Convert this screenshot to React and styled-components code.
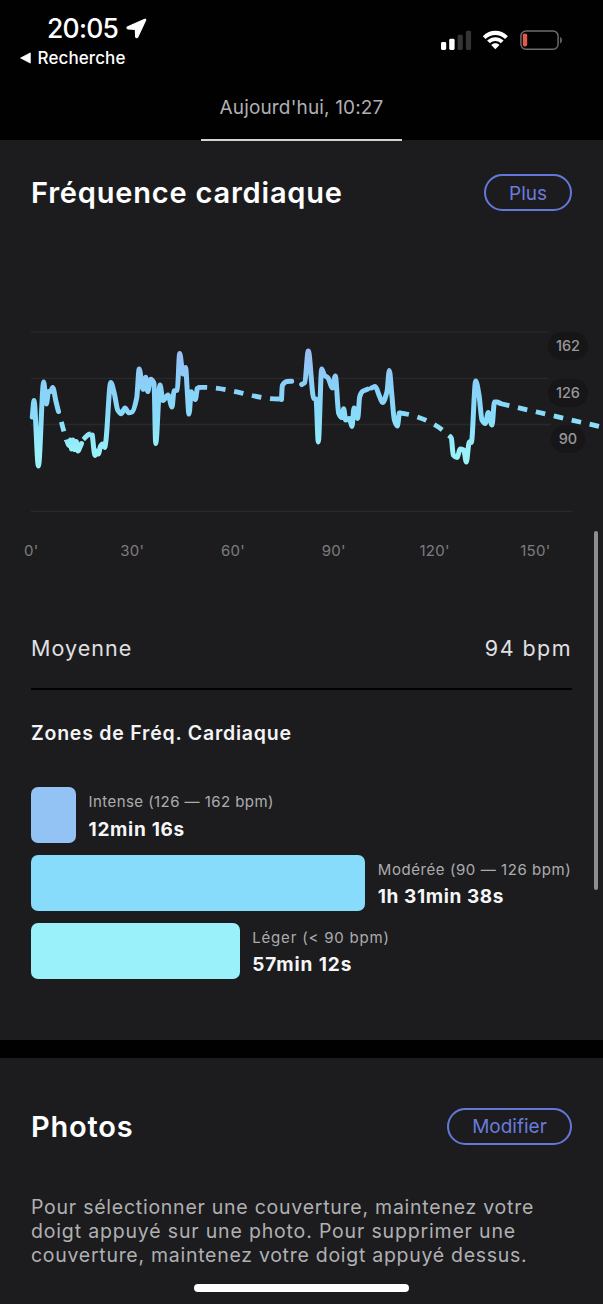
import React from "react";
import styled, { createGlobalStyle } from "styled-components";

const GlobalStyle = createGlobalStyle`
  * { box-sizing: border-box; }
  body {
    margin: 0;
    background: #020102;
    font-family: Inter, "Liberation Sans", sans-serif;
    -webkit-font-smoothing: antialiased;
  }
`;

const Screen = styled.div`
  position: relative;
  width: 603px;
  height: 1304px;
  overflow: hidden;
  display: flex;
  flex-direction: column;
  background: #020102;
  color: #fff;
  white-space: nowrap;
`;

const StatusBar = styled.div`
  display: flex;
  justify-content: space-between;
  height: 78px;
  padding: 14px 40px 0 20px;
`;

const ClockRow = styled.div`
  display: flex;
  align-items: center;
  height: 28px;
  padding-left: 27px;
  gap: 8px;
`;

const Clock = styled.span`
  font-size: 26.5px;
  font-weight: 550;
  letter-spacing: -0.75px;
  line-height: 28px;
`;

const BackLink = styled.div`
  display: flex;
  align-items: center;
  gap: 6.5px;
  height: 20px;
  margin-top: 6px;
  font-size: 17px;
  font-weight: 500;
  letter-spacing: 0.1px;
`;

const StatusIcons = styled.div`
  display: flex;
  align-items: center;
  height: 20px;
  margin-top: 16px;
`;

const DateTab = styled.div`
  display: flex;
  justify-content: center;
  width: 201px;
  height: 63px;
  margin: 0 auto;
  padding-top: 18px;
  border-bottom: 2px solid #d2d4d4;
  color: #b0b0b2;
  font-size: 19px;
  font-weight: 400;
  line-height: 24px;
  letter-spacing: 0.16px;
  z-index: 1;
`;

const Section = styled.section`
  background: #1c1c1e;
  padding: ${(p) => p.$top}px 31px 0;
  height: ${(p) => p.$height}px;
  margin-top: ${(p) => p.$gap}px;
  flex: none;
`;

const SectionHeader = styled.header`
  display: flex;
  justify-content: space-between;
  align-items: center;
  height: 37px;
`;

const Title = styled.h2`
  margin: 0;
  font-size: 29px;
  font-weight: 600;
  letter-spacing: 0.8px;
`;

const OutlineButton = styled.button`
  height: 37px;
  padding: 1px 0 0;
  border: 2px solid #6478da;
  border-radius: 19px;
  background: transparent;
  color: #6a7bdb;
  font: 400 19px Inter, sans-serif;
  letter-spacing: 0;
  width: ${(p) => p.$width}px;
  text-align: center;
`;

const Chart = styled.div`
  position: relative;
  height: 200px;
  margin-top: 109px;
  margin-right: -31px;
`;

const Plot = styled.svg`
  display: block;
  position: relative;
  overflow: visible;
`;

const Levels = styled.div`
  position: absolute;
  top: 12px;
  right: 15px;
  display: flex;
  flex-direction: column;
  align-items: center;
  gap: 18.6px;
`;

const Level = styled.span`
  height: 28px;
  padding: 0 8px;
  border-radius: 14px;
  background: #161618;
  color: #98989b;
  font-size: 14.5px;
  font-weight: 500;
  line-height: 28px;
`;

const TimeAxis = styled.div`
  display: grid;
  grid-template-columns: repeat(6, 100.8px);
  justify-items: center;
  margin: 20px -45px 0 -50px;
  color: #7c7c7f;
  font-size: 15px;
  font-weight: 400;
  line-height: 22px;
  letter-spacing: 0.3px;
`;

const AverageRow = styled.div`
  display: flex;
  justify-content: space-between;
  align-items: center;
  height: 83px;
  margin-top: 45px;
  border-bottom: 2px solid #020202;
  color: #e0e0e2;
  font-size: 21.5px;
  font-weight: 400;
  letter-spacing: 1.05px;
`;

const AverageValue = styled.span`
  letter-spacing: 1.45px;
`;

const Subtitle = styled.h3`
  margin: 30px 0 0;
  color: #f4f4f6;
  font-size: 19.5px;
  font-weight: 600;
  line-height: 26px;
  letter-spacing: 0.78px;
`;

const Zones = styled.div`
  display: flex;
  flex-direction: column;
  gap: 12.2px;
  margin-top: 41px;
`;

const Zone = styled.div`
  display: flex;
  height: 55.8px;
  gap: 12.5px;
`;

const ZoneBar = styled.div`
  width: ${(p) => p.$width}px;
  background: ${(p) => p.$color};
  border-radius: 7px;
  flex: none;
`;

const ZoneInfo = styled.div`
  display: flex;
  flex-direction: column;
  padding-top: 4px;
`;

const ZoneLabel = styled.span`
  color: #acacaf;
  font-size: 15px;
  font-weight: 400;
  line-height: 22px;
  letter-spacing: ${(p) => p.$tracking}px;
`;

const ZoneValue = styled.span`
  margin-top: 4.5px;
  color: #f6f6f8;
  font-size: 19px;
  font-weight: 700;
  line-height: 24px;
  letter-spacing: ${(p) => p.$tracking}px;
`;

const Hint = styled.p`
  margin: 50px 0 0;
  color: #b0b0b3;
  font-size: 19.5px;
  font-weight: 400;
  line-height: 24px;
`;

const HintLine = styled.span`
  display: block;
  letter-spacing: ${(p) => p.$tracking}px;
`;

const ScrollThumb = styled.div`
  position: absolute;
  top: 531px;
  right: 5px;
  width: 4.5px;
  height: 359px;
  border-radius: 3px;
  background: #8e8e90;
`;

const HomeIndicator = styled.div`
  position: absolute;
  bottom: 12.5px;
  left: 194px;
  width: 215px;
  height: 8px;
  border-radius: 4px;
  background: #fff;
`;

/* Monotone cubic interpolation, so peaks never overshoot their samples. */
function smoothPath(points) {
  const n = points.length;
  const slope = [];
  for (let i = 0; i < n - 1; i++) {
    slope.push((points[i + 1][1] - points[i][1]) / (points[i + 1][0] - points[i][0]));
  }
  const tangent = points.map((_, i) => {
    if (i === 0) return slope[0];
    if (i === n - 1) return slope[n - 2];
    const a = slope[i - 1];
    const b = slope[i];
    return a * b <= 0 ? 0 : (2 * a * b) / (a + b);
  });
  let d = `M${points[0][0]} ${points[0][1]}`;
  for (let i = 0; i < n - 1; i++) {
    const [x0, y0] = points[i];
    const [x1, y1] = points[i + 1];
    const h = (x1 - x0) / 3;
    d += `C${x0 + h} ${y0 + tangent[i] * h} ${x1 - h} ${y1 - tangent[i + 1] * h} ${x1} ${y1}`;
  }
  return d;
}

const measured = [
  [[32.3, 417], [34, 400.5], [38.4, 466], [43.7, 382], [46.3, 404], [48.7, 391.5], [50.6, 391.5], [52.7, 387.5], [56, 401.7], [58.5, 411.5]],
  [[67.5, 442.5], [69, 445.5], [70.2, 440], [71.6, 449], [73, 440], [74.6, 449.5], [76.3, 441.5], [78, 451], [80, 447], [81.5, 443.5]],
  [[92.3, 435], [95, 455.5], [96.5, 451], [98.7, 454], [100.3, 446.5], [102.5, 444], [104.7, 447.5], [106, 440], [110.7, 382.5], [114.3, 393.3], [117.7, 410], [121.3, 413.7], [125, 408], [128.7, 412.7], [132, 412], [136.7, 398], [139.2, 369], [143, 389.3], [145.7, 377.2], [147.7, 391.5], [150.7, 379.3], [154, 383.3], [155.7, 443.5], [160, 385], [163, 400.5], [168, 395], [172, 407], [174, 391], [177.3, 390], [179.7, 353.5], [183, 374], [185.7, 367.5], [187, 386.7], [189, 414], [191.3, 391.7], [195.3, 399.5], [197.2, 388.5]],
  [[281.5, 399.5], [282.3, 385.5], [287, 381.5], [291.7, 381.2]],
  [[301.7, 384.5], [304.7, 382.7], [308.3, 351], [313.7, 398.5], [316, 399], [318.3, 442], [321.7, 369], [324.3, 375], [328.3, 378.3], [332.3, 388], [335.3, 376], [338.7, 413.3], [341.7, 417.5], [343.7, 408.8], [345.7, 420], [349.3, 418.6], [352, 426.5], [354, 408], [357.7, 418.5], [359.7, 396.7], [362.7, 391.3], [367.5, 389.2]],
  [[371.5, 388], [375.3, 386.5], [379, 395], [382.5, 402.5], [387, 391.7], [389.3, 370.5], [391.7, 393.3], [394.3, 419.5], [397.3, 426], [399.3, 413]],
  [[450.5, 437], [451.3, 438], [453.3, 455], [457.3, 457.5], [460, 449], [463.7, 450], [466.3, 462], [469.3, 442], [471.3, 442.5], [475.7, 381], [479, 395], [482, 420], [485.3, 423.5], [488.3, 412.5], [492, 425], [494.5, 402], [497, 402], [500, 403.3]],
];

const estimated = [
  { d: "M59 413.3L66.5 441", offset: 9.4 },
  { d: "M83.3 439.5C86 437 87 434 91 434", offset: 0 },
  { d: "M197.5 387.5C230 386 251 399 279.5 399", offset: 0 },
  { d: "M399.5 412.8C418 415 438 424 450 436.7", offset: 0 },
  { d: "M500 403.5L603 427.3", offset: 0 },
];

const levels = [162, 126, 90];
const times = ["0'", "30'", "60'", "90'", "120'", "150'"];

const zones = [
  { label: "Intense (126 — 162 bpm)", value: "12min 16s", width: 45, color: "#93c3f5", lt: 0.44, vt: 0.7 },
  { label: "Modérée (90 — 126 bpm)", value: "1h 31min 38s", width: 334.3, color: "#87dbfb", lt: 0.57, vt: 0.6 },
  { label: "Léger (< 90 bpm)", value: "57min 12s", width: 208.8, color: "#9bf1fa", lt: 0.8, vt: 0.9 },
];

function HeartRateChart() {
  return (
    <Chart>
      <Levels>
        {levels.map((l) => (
          <Level key={l}>{l}</Level>
        ))}
      </Levels>
      <Plot width="572" height="200" viewBox="31 320 572 200" fill="none">
        <defs>
          <linearGradient id="rate" gradientUnits="userSpaceOnUse" x1="0" y1="350" x2="0" y2="466">
            <stop offset="0" stopColor="#99bdf3" />
            <stop offset="0.3" stopColor="#8ad0f9" />
            <stop offset="0.58" stopColor="#88dcfa" />
            <stop offset="0.88" stopColor="#99f1f9" />
            <stop offset="1" stopColor="#9bf3fa" />
          </linearGradient>
        </defs>
        <g stroke="#29292b" strokeWidth="1.3">
          <path d="M31 331.8H548M31 378.4H548M31 424.5H551M31 511.3H572" />
        </g>
        <g stroke="url(#rate)" strokeWidth="5" strokeLinejoin="round">
          {measured.map((points, i) => (
            <path key={i} d={smoothPath(points)} strokeLinecap="round" />
          ))}
          {estimated.map((e, i) => (
            <path key={i} d={e.d} strokeWidth="4.8" strokeDasharray="9.6 8.8" strokeDashoffset={e.offset} />
          ))}
        </g>
      </Plot>
    </Chart>
  );
}

function LocationIcon() {
  return (
    <svg width="21" height="21" viewBox="0 0 21 21">
      <path
        d="M18.8 1.4L1.8 8.8C0.7 9.3 0.8 10.9 2.1 10.9L9.5 11.2L9.7 18.4C9.8 19.8 11.2 20 11.8 18.8L19.5 2.2C19.8 1.6 19.4 1.1 18.8 1.4Z"
        fill="#fff"
        stroke="#fff"
        strokeWidth="1.4"
        strokeLinejoin="round"
      />
    </svg>
  );
}

function SystemIcons() {
  return (
    <StatusIcons>
      <svg width="122" height="22" viewBox="0 0 122 22" fill="none">
        <rect x="0" y="13" width="5.2" height="8" rx="1.4" fill="#fff" />
        <rect x="8.2" y="9.8" width="5.4" height="11.2" rx="1.4" fill="#fff" />
        <rect x="16.6" y="5.7" width="5.2" height="15.3" rx="1.4" fill="#343435" />
        <rect x="24.9" y="1.8" width="5.2" height="19.2" rx="1.4" fill="#343435" />
        <path d="M41.8 7.2L44.6 10C50.2 4.6 58.4 4.6 64 10L66.9 7.2C59.8 0 48.9 0 41.8 7.2Z" fill="#fff" />
        <path d="M46.1 11.6L48.9 14.3C52.3 11.1 56.4 11.1 59.8 14.3L62.6 11.6C57.8 7 50.9 7 46.1 11.6Z" fill="#fff" />
        <path d="M50.2 16L54.35 20.3L58.5 16C56.2 13.7 52.5 13.7 50.2 16Z" fill="#fff" />
        <rect x="79.9" y="2" width="37.2" height="18.2" rx="5" stroke="#6c6c6d" strokeWidth="1.5" />
        <rect x="81.8" y="4.4" width="4.4" height="13.2" rx="1.8" fill="#e05a4c" />
        <path d="M119.1 8V14.4C121.6 13.6 121.6 8.8 119.1 8Z" fill="#6c6c6d" />
      </svg>
    </StatusIcons>
  );
}

export default function App() {
  return (
    <Screen>
      <GlobalStyle />
      <StatusBar>
        <div>
          <ClockRow>
            <Clock>20:05</Clock>
            <LocationIcon />
          </ClockRow>
          <BackLink>
            <svg width="11" height="12" viewBox="0 0 11 12">
              <path d="M10.3 0.9V11.1L0.6 6Z" fill="#fff" stroke="#fff" strokeWidth="0.8" strokeLinejoin="round" />
            </svg>
            Recherche
          </BackLink>
        </div>
        <SystemIcons />
      </StatusBar>
      <DateTab>Aujourd'hui, 10:27</DateTab>

      <Section $top={34} $height={900} $gap={-1}>
        <SectionHeader>
          <Title>Fréquence cardiaque</Title>
          <OutlineButton $width={88}>Plus</OutlineButton>
        </SectionHeader>
        <HeartRateChart />
        <TimeAxis>
          {times.map((t) => (
            <span key={t}>{t}</span>
          ))}
        </TimeAxis>
        <AverageRow>
          <span>Moyenne</span>
          <AverageValue>94 bpm</AverageValue>
        </AverageRow>
        <Subtitle>Zones de Fréq. Cardiaque</Subtitle>
        <Zones>
          {zones.map((z) => (
            <Zone key={z.label}>
              <ZoneBar $width={z.width} $color={z.color} />
              <ZoneInfo>
                <ZoneLabel $tracking={z.lt}>{z.label}</ZoneLabel>
                <ZoneValue $tracking={z.vt}>{z.value}</ZoneValue>
              </ZoneInfo>
            </Zone>
          ))}
        </Zones>
      </Section>

      <Section $top={49.5} $height={246} $gap={18}>
        <SectionHeader>
          <Title>Photos</Title>
          <OutlineButton $width={125}>Modifier</OutlineButton>
        </SectionHeader>
        <Hint>
          <HintLine $tracking={0.75}>Pour sélectionner une couverture, maintenez votre</HintLine>
          <HintLine $tracking={0.83}>doigt appuyé sur une photo. Pour supprimer une</HintLine>
          <HintLine $tracking={0.72}>couverture, maintenez votre doigt appuyé dessus.</HintLine>
        </Hint>
      </Section>

      <ScrollThumb />
      <HomeIndicator />
    </Screen>
  );
}
